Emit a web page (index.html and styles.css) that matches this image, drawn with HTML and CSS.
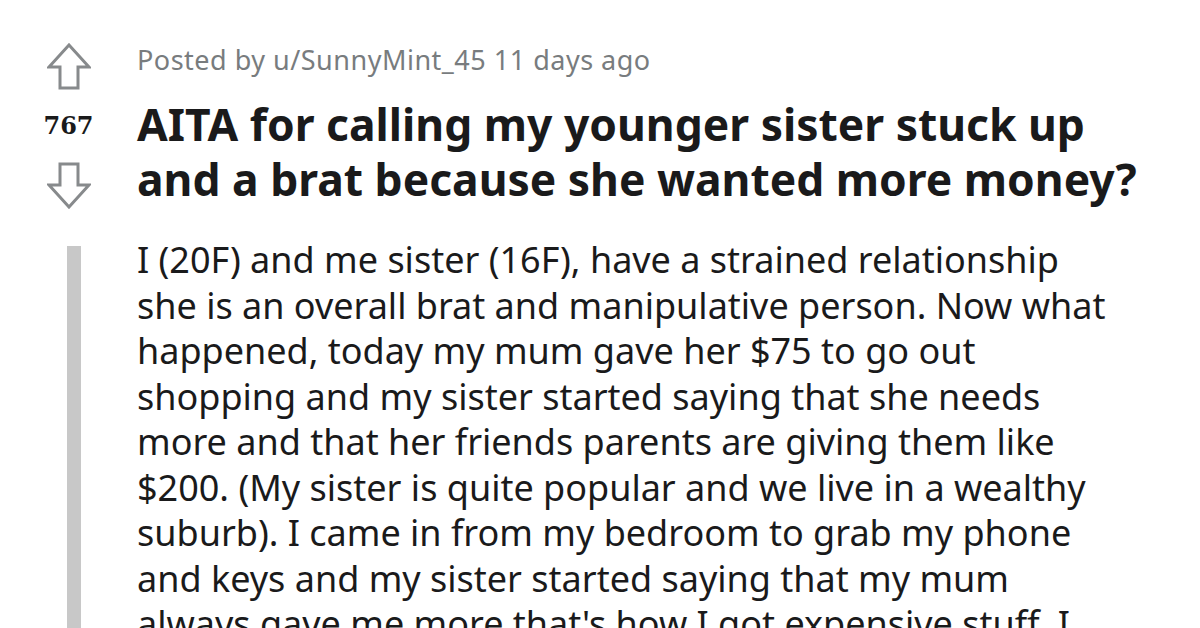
FILE: index.html
```html
<!DOCTYPE html>
<html>
<head>
<meta charset="utf-8">
<link rel="stylesheet" href="styles.css">
</head>
<body>
<div class="post">
  <div class="vote">
    <svg class="arrow" width="44" height="47" viewBox="0 0 44 47"><polygon points="22,2 42,24 31,24 31,45 13,45 13,24 2,24" fill="none" stroke="#878a8c" stroke-width="3" stroke-linejoin="miter"/></svg>
    <div class="score">767</div>
    <svg class="arrow" width="44" height="47" viewBox="0 0 44 47"><polygon points="22,45 42,23 31,23 31,2 13,2 13,23 2,23" fill="none" stroke="#878a8c" stroke-width="3" stroke-linejoin="miter"/></svg>
  </div>
  <div class="head">
    <div class="meta">Posted by u/SunnyMint_45 11 days ago</div>
    <h1 class="title">AITA for calling my younger sister stuck up<br>and a brat because she wanted more money?</h1>
  </div>
  <div class="rail"><div class="bar"></div></div>
  <div class="body">
    <p>I (20F) and me sister (16F), have a strained relationship<br>she is an overall brat and manipulative person. Now what<br>happened, today my mum gave her $75 to go out<br>shopping and my sister started saying that she needs<br>more and that her friends parents are giving them like<br>$200. (My sister is quite popular and we live in a wealthy<br>suburb). I came in from my bedroom to grab my phone<br>and keys and my sister started saying that my mum<br>always gave me more that's how I got expensive stuff. I<br>told her that wasn't true and that I worked for everything I own.</p>
  </div>
</div>
</body>
</html>
```
FILE: styles.css
```css
html, body {
  margin: 0;
  padding: 0;
  background: #ffffff;
  overflow: hidden;
}
body {
  width: 1200px;
  height: 628px;
}
.post {
  display: grid;
  grid-template-columns: 137px 1fr;
  padding-top: 43px;
  height: 585px;
  overflow: hidden;
}
.vote {
  display: flex;
  flex-direction: column;
  align-items: center;
}
.arrow {
  display: block;
}
.score {
  font-family: "DejaVu Serif", serif;
  font-weight: bold;
  font-size: 24px;
  color: #1a1a1b;
  line-height: 28px;
  margin: 22px 0 22px;
}
.head {
  min-width: 0;
}
.meta {
  font-family: "Noto Sans", sans-serif;
  font-size: 27px;
  letter-spacing: 0.5px;
  color: #787c7e;
  line-height: 34px;
}
.title {
  margin: 20px 0 0;
  font-family: "Noto Sans", sans-serif;
  font-weight: bold;
  font-size: 44.4px;
  line-height: 55px;
  color: #1a1a1b;
  white-space: nowrap;
}
.rail {
  padding: 37px 0 0 67px;
  overflow: hidden;
}
.bar {
  width: 14px;
  height: 400px;
  background: #c8c8c8;
}
.body {
  padding-top: 28px;
  min-width: 0;
  overflow: hidden;
}
.body p {
  margin: 0;
  font-family: "Noto Sans", sans-serif;
  font-size: 36px;
  line-height: 45.5px;
  color: #1a1a1b;
  white-space: nowrap;
}
```
